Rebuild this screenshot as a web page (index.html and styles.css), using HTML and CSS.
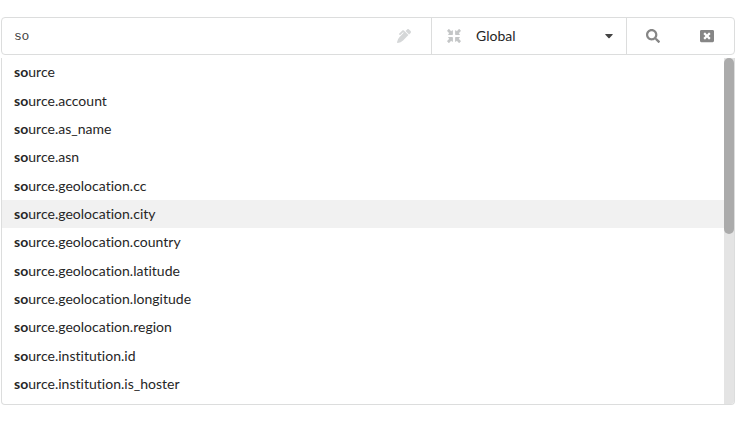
FILE: index.html
```html
<!DOCTYPE html>
<html lang="en">
<head>
<meta charset="utf-8">
<title>Search</title>
<link rel="stylesheet" href="styles.css">
</head>
<body>
<main class="search">
  <div class="bar">
    <div class="query"><span class="typed">so</span>
      <svg class="icon pen" viewBox="0 0 512 512"><path d="M497.94 74.17l-60.11-60.11c-18.75-18.75-49.16-18.75-67.91 0l-56.55 56.55 128.02 128.02 56.55-56.55c18.75-18.75 18.75-49.15 0-67.91zm-246.8-20.53c-15.62-15.62-40.94-15.62-56.56 0L75.8 172.43c-6.25 6.25-6.25 16.38 0 22.62l22.63 22.63c6.25 6.25 16.38 6.25 22.63 0l101.82-101.82 22.63 22.62L93.95 290.03A327.038 327.038 0 0 0 .17 485.11l-.03.23c-1.7 15.28 11.21 28.2 26.49 26.51a327.02 327.02 0 0 0 195.34-93.8l196.79-196.79-82.77-82.77-84.85-84.85z"/></svg>
    </div>
    <div class="scope">
      <svg class="icon compress" viewBox="0 0 512 512"><path id="arrow" d="M216 60V192Q216 216 192 216H60Q34 212 44 188L82 153L4 76Q-3 68 4 60L60 4Q68-3 76 4L153 82L188 44Q212 34 216 60z"/><use href="#arrow" transform="matrix(-1 0 0 1 512 0)"/><use href="#arrow" transform="matrix(1 0 0 -1 0 512)"/><use href="#arrow" transform="matrix(-1 0 0 -1 512 512)"/></svg>
      <span class="scope-name">Global</span>
      <svg class="caret" viewBox="0 0 8 5"><path d="M.6 0h6.8q.6.3.2.8L4.6 4.1q-.6.5-1.2 0L.4.8Q0 .3.6 0z"/></svg>
    </div>
    <div class="actions">
      <svg class="icon" viewBox="0 0 512 512"><path d="M505 442.7L405.3 343c-4.5-4.5-10.6-7-17-7H372c27.6-35.3 44-79.7 44-128C416 93.1 322.9 0 208 0S0 93.1 0 208s93.1 208 208 208c48.3 0 92.7-16.4 128-44v16.3c0 6.4 2.5 12.5 7 17l99.7 99.7c9.4 9.4 24.6 9.4 33.9 0l28.3-28.3c9.4-9.4 9.4-24.6.1-34zM208 336c-70.7 0-128-57.2-128-128 0-70.7 57.2-128 128-128 70.7 0 128 57.2 128 128 0 70.7-57.2 128-128 128z"/></svg>
      <svg class="icon" viewBox="0 0 512 512"><path d="M464 32H48C21.5 32 0 53.5 0 80v352c0 26.5 21.5 48 48 48h416c26.5 0 48-21.5 48-48V80c0-26.5-21.5-48-48-48zm-83.6 290.5c4.8 4.8 4.8 12.6 0 17.4l-40.5 40.5c-4.8 4.8-12.6 4.8-17.4 0L256 313.3l-66.5 67.1c-4.8 4.8-12.6 4.8-17.4 0l-40.5-40.5c-4.8-4.8-4.8-12.6 0-17.4l67.1-66.5-67.1-66.5c-4.8-4.8-4.8-12.6 0-17.4l40.5-40.5c4.8-4.8 12.6-4.8 17.4 0l66.5 67.1 66.5-67.1c4.8-4.8 12.6-4.8 17.4 0l40.5 40.5c4.8 4.8 4.8 12.6 0 17.4L313.3 256l67.1 66.5z"/></svg>
    </div>
  </div>
  <div class="results">
    <ul class="list">
      <li><b>so</b>urce</li>
      <li><b>so</b>urce.account</li>
      <li><b>so</b>urce.as_name</li>
      <li><b>so</b>urce.asn</li>
      <li><b>so</b>urce.geolocation.cc</li>
      <li class="active"><b>so</b>urce.geolocation.city</li>
      <li><b>so</b>urce.geolocation.country</li>
      <li><b>so</b>urce.geolocation.latitude</li>
      <li><b>so</b>urce.geolocation.longitude</li>
      <li><b>so</b>urce.geolocation.region</li>
      <li><b>so</b>urce.institution.id</li>
      <li><b>so</b>urce.institution.is_hoster</li>
    </ul>
    <div class="track"><div class="thumb"></div></div>
  </div>
</main>
</body>
</html>
```
FILE: styles.css
```css
* { box-sizing: border-box; }
body {
  margin: 0;
  background: #fff;
  color: #262626;
  font-family: Lato, sans-serif;
  font-size: 14px;
  font-variant-ligatures: none;
  letter-spacing: 0.02px;
}
.search { padding: 17px 1px 0; }
.bar {
  display: flex;
  height: 38px;
  border: 1px solid #dcdddd;
  border-radius: 4px;
}
.query {
  display: flex;
  align-items: center;
  justify-content: space-between;
  width: 429px;
  padding: 0 20px 0 12px;
}
.typed {
  font-family: "Liberation Mono", monospace;
  font-size: 13px;
  letter-spacing: -0.4px;
  color: #444;
}
.icon {
  width: 14px;
  height: 14px;
  fill: #868686;
}
.icon.pen { fill: #d5d7d8; }
.icon.compress { fill: #c4c6c7; }
.scope {
  display: flex;
  align-items: center;
  width: 196px;
  padding: 0 13px 0 15px;
  border: solid #dcdddd;
  border-width: 0 1px;
}
.scope-name { flex: 1; margin-left: 15px; padding-bottom: 2px; }
.caret { width: 8px; height: 5px; fill: #444; }
.actions {
  display: flex;
  flex: 1;
  align-items: center;
  justify-content: space-between;
  padding: 0 20px 0 19px;
}
.results {
  display: flex;
  height: 347px;
  margin-top: 3px;
  border: 1px solid #dcdddd;
  border-top: 0;
  border-radius: 0 0 4px 4px;
  overflow: hidden;
}
.list {
  flex: 1;
  margin: 0;
  padding: 0.3px 0 0;
  list-style: none;
}
.list li {
  height: 28.35px;
  padding-left: 12px;
  line-height: 28.35px;
}
.list .active { background: #f1f1f1; }
.track { width: 10px; background: #e4e4e4; }
.thumb { height: 176px; border-radius: 5px; background: #ababab; }
```
